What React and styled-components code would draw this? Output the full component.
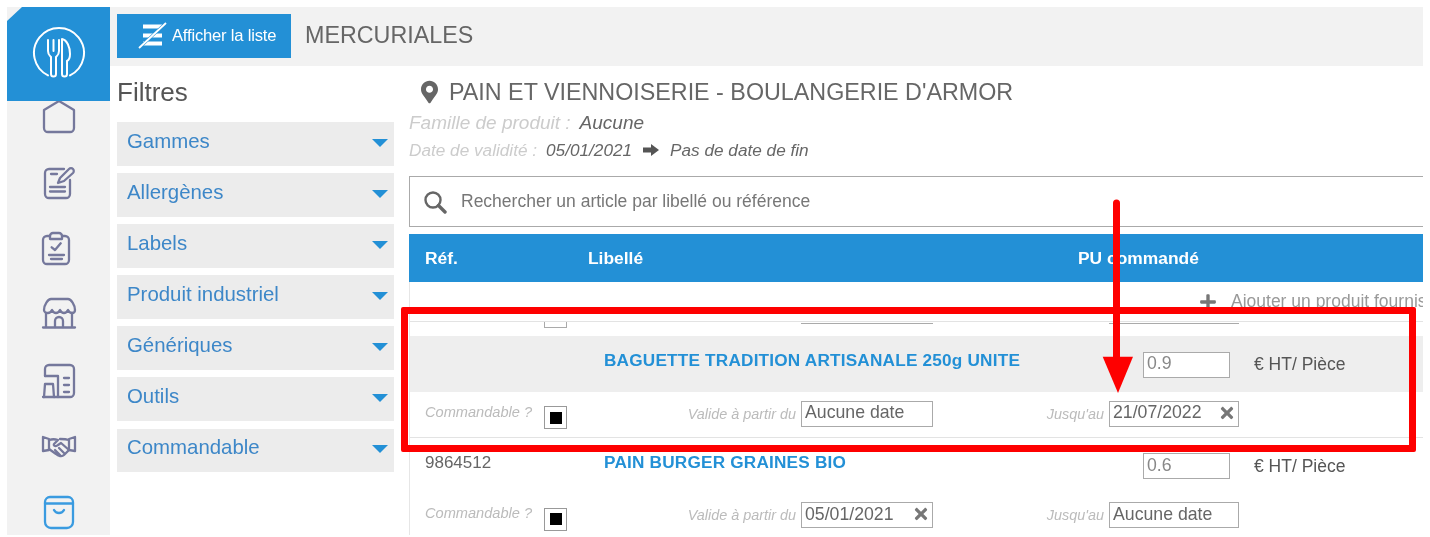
import { createGlobalStyle } from 'styled-components'
import styled from 'styled-components'
import { FaMapMarkerAlt, FaTimes, FaPlus } from 'react-icons/fa'

const GlobalStyle = createGlobalStyle`
  html, body { margin: 0; padding: 0; background: #fff; }
  body { font-family: "Liberation Sans", Arial, sans-serif; }
  * { box-sizing: border-box; }
`

const blue = '#2390d6'

const Page = styled.div`
  position: relative;
  width: 1430px;
  height: 537px;
  overflow: hidden;
  padding: 7px 7px 2px;
  display: flex;
  filter: blur(0.45px);
`
const Sidebar = styled.nav`
  width: 103px;
  flex: none;
  background: #f2f2f2;
  display: flex;
  flex-direction: column;
  align-items: center;
`
const Logo = styled.div`
  position: relative;
  z-index: 1;
  width: 100%;
  height: 94px;
  flex: none;
  padding-bottom: 2px;
  background: ${blue};
  clip-path: polygon(15px 0, 100% 0, 100% 100%, 0 100%, 0 14px);
  display: flex;
  align-items: center;
  justify-content: center;
  margin-bottom: -2px;
`
const NavIcon = styled.svg`
  width: 34px;
  height: 34px;
  flex: none;
  margin-bottom: 32px;
  overflow: visible;
  fill: none;
  stroke: ${props => props.$active ? '#3a9be0' : '#75789c'};
  stroke-width: 2.3;
  stroke-linecap: round;
  stroke-linejoin: round;
`
const Content = styled.div`
  flex: 1;
  min-width: 0;
  display: flex;
  flex-direction: column;
`
const TopBar = styled.header`
  height: 59px;
  flex: none;
  background: #f2f2f2;
  display: flex;
  align-items: center;
  padding: 0 0 1px 7px;
  gap: 14px;
`
const ListButton = styled.button`
  width: 174px;
  height: 44px;
  border: none;
  background: ${blue};
  color: #fff;
  font: 16.6px "Liberation Sans", Arial, sans-serif;
  letter-spacing: -0.2px;
  display: flex;
  align-items: center;
  gap: 5px;
  padding: 0 0 0 20px;
`
const PageTitle = styled.h1`
  margin: 0 0 2px;
  font-size: 23.3px;
  font-weight: 400;
  color: #666;
`
const Body = styled.div`
  flex: 1;
  min-height: 0;
  overflow: hidden;
  display: flex;
`
const Filters = styled.aside`
  width: 277px;
  flex: none;
  margin-left: 7px;
`
const FiltersTitle = styled.h2`
  margin: 0;
  height: 56px;
  padding-top: 11px;
  font-size: 26px;
  line-height: 30px;
  font-weight: 400;
  color: #555;
`
const FilterItem = styled.div`
  height: 43.5px;
  margin-bottom: 7.6px;
  background: #ececec;
  display: flex;
  align-items: center;
  justify-content: space-between;
  padding: 0 6px 5px 10px;
  font-size: 20.4px;
  color: #3d87c8;
`
const Caret = styled.span`
  width: 0;
  height: 0;
  margin-top: 3px;
  border-left: 8px solid transparent;
  border-right: 8px solid transparent;
  border-top: 8px solid ${blue};
`
const Main = styled.main`
  flex: 1;
  min-width: 0;
  margin-left: 15px;
`
const SupplierTitle = styled.h2`
  margin: 0 0 2px;
  height: 41px;
  padding: 11px 0 0 12px;
  display: flex;
  align-items: center;
  gap: 11px;
  font-size: 23.3px;
  font-weight: 400;
  color: #666;
  white-space: nowrap;
  svg { width: 17px; height: 26px; color: #666; }
`
const InfoLine = styled.div`
  height: ${props => props.$h}px;
  display: flex;
  align-items: center;
  font-size: ${props => props.$size}px;
  font-style: italic;
  color: #666;
  white-space: nowrap;
`
const Muted = styled.span`
  color: #ccc;
  margin-right: 9px;
`
const BlockArrow = styled.svg`
  width: 16px;
  height: 12px;
  margin: 0 11px;
  fill: #555;
`
const SearchBox = styled.div`
  margin-top: 12px;
  height: 51px;
  border: 1px solid #aaa;
  border-right: none;
  display: flex;
  align-items: center;
  padding-left: 13px;
  gap: 14px;
  font-size: 17.5px;
  color: #777;
  svg { width: 24px; height: 24px; }
`
const TableHead = styled.div`
  margin-top: 7px;
  height: 48px;
  background: ${blue};
  color: #fff;
  font-size: 17.4px;
  font-weight: 700;
  display: grid;
  grid-template-columns: 163px 490px auto;
  align-items: center;
  padding-left: 16px;
`
const Table = styled.div`
  border-left: 1px solid #e6e6e6;
`
const AddRow = styled.div`
  height: 40px;
  border-bottom: 1px solid #e3e3e3;
  display: flex;
  align-items: center;
  padding: 0 0 0 789px;
  gap: 14px;
  font-size: 17.5px;
  color: #999;
  white-space: nowrap;
  overflow: hidden;
  svg { width: 18px; height: 18px; color: #777; flex: none; }
`
const StubRow = styled.div`
  height: 14px;
  display: grid;
  grid-template-columns: 134px 23px 234px 132px 176px 130px;
  align-items: start;
`
const Stub = styled.div`
  grid-column: ${props => props.$col};
  height: ${props => props.$h}px;
  border: 1px solid #aaa;
  border-top: none;
  ${props => props.$flat && 'border-left: none; border-right: none;'}
`
const ProductRow = styled.div`
  height: ${props => props.$h}px;
  background: ${props => props.$shade ? '#eeeeee' : '#fff'};
  display: grid;
  grid-template-columns: 179px 539px 87px auto;
  padding: 0 0 0 15px;
  align-items: center;
  font-size: 17px;
  color: #666;
`
const ProductName = styled.div`
  color: ${blue};
  font-size: 17.2px;
  font-weight: 700;
  letter-spacing: 0.2px;
  white-space: nowrap;
  margin-top: ${props => props.$up}px;
`
const RefCell = styled.div`
  margin-top: ${props => props.$up}px;
`
const Field = styled.div`
  height: 26px;
  border: 1px solid #aaa;
  background: #fff;
  padding: 0 3px 2px;
  display: flex;
  align-items: center;
  justify-content: space-between;
  font-size: 17.7px;
  color: #666;
  white-space: nowrap;
  svg { width: 18px; height: 18px; color: #777; margin-right: -1px; }
`
const PriceField = styled(Field)`
  color: #888;
  margin-top: ${props => props.$down}px;
`
const Unit = styled.div`
  margin: ${props => props.$down}px 0 0 24px;
  font-size: 17.5px;
  color: #555;
`
const DetailRow = styled.div`
  height: ${props => props.$h}px;
  display: grid;
  grid-template-columns: 119px 23px 234px 132px 176px 130px;
  padding: 0 0 ${props => props.$line ? 2 : 0}px 15px;
  align-items: center;
  ${props => props.$line && 'border-bottom: 1px solid #e3e3e3;'}
`
const CheckLabel = styled.span`
  font-size: 14.6px;
  font-style: italic;
  color: #bbb;
  white-space: nowrap;
  margin-top: -4px;
`
const FieldLabel = styled.span`
  font-size: 14.4px;
  font-style: italic;
  color: #bbb;
  text-align: right;
  padding-right: 5px;
  white-space: nowrap;
`
const CheckBox = styled.span`
  width: 23px;
  height: 23px;
  margin-top: 8px;
  border: 1px solid #999;
  display: flex;
  align-items: center;
  justify-content: center;
  &::after {
    content: '';
    width: 12px;
    height: 12px;
    background: #000;
  }
`
// annotation drawn over the screenshot
const RedFrame = styled.div`
  position: absolute;
  left: 401px;
  top: 307px;
  width: 1015px;
  height: 145px;
  border: 7px solid #fe0000;
  border-radius: 2px;
  pointer-events: none;
`
const RedArrow = styled.svg`
  position: absolute;
  left: 1095px;
  top: 198px;
  width: 44px;
  height: 196px;
  pointer-events: none;
`

const filterNames = ['Gammes', 'Allergènes', 'Labels', 'Produit industriel', 'Génériques', 'Outils', 'Commandable']

const PlateLogo = () => (
  <svg width="54" height="54" viewBox="0 0 54 54" fill="none" stroke="#fff" strokeWidth="2" strokeLinecap="round" strokeLinejoin="round">
    <path d="M16 49.4A25 25 0 1 1 38 49.4" />
    <path d="M16 14v11c0 4 2 5 3 6v17a2.500 2.500 0 0 0 5 0V31c1-1 3-2 3-6V14M21.500 14v11" />
    <path d="M30 13c5 1 8 8 8 15 0 4-1 6-3 7v13a2.500 2.500 0 0 1-5 0z" />
  </svg>
)

const NoListIcon = () => (
  <svg width="30" height="28" viewBox="0 0 30 28" fill="none" stroke="#fff">
    <path d="M6 4.500h19M6 13.500h19M6 21.500h19" strokeWidth="3.800" />
    <path d="M2 26L29 1" strokeWidth="3" stroke={blue} />
    <path d="M2 26L29 1" strokeWidth="1.800" />
  </svg>
)

const HomeIcon = () => (
  <NavIcon viewBox="0 0 34 34">
    <path d="M17 2L32 11V29a4 4 0 0 1-4 4H6a4 4 0 0 1-4-4V11z" />
  </NavIcon>
)
const NoteIcon = () => (
  <NavIcon viewBox="0 0 34 34">
    <path d="M28 15v14a4 4 0 0 1-4 4H7a4 4 0 0 1-4-4V8a4 4 0 0 1 4-4h15" />
    <path d="M9 9h6M8 22h15M8 26.500h15" />
    <path d="M16 18l2-5L27 4c1-1 3-1 4 0s1 3 0 4l-9 8z" />
  </NavIcon>
)
const ClipboardIcon = () => (
  <NavIcon viewBox="0 0 34 34">
    <path d="M8 5H5a4 4 0 0 0-4 4v20a4 4 0 0 0 4 4h18a4 4 0 0 0 4-4V9a4 4 0 0 0-4-4h-3" />
    <path d="M11 2h6a3 3 0 0 1 3 3v3H8V5a3 3 0 0 1 3-3z" />
    <path d="M9.700 16.300L13 19l5.700-6.700M7 24h15M9 28h11" />
  </NavIcon>
)
const StoreIcon = () => (
  <NavIcon viewBox="0 0 34 34">
    <path d="M9 2h17c3 0 7 6 7 11 0 2-1 3-3 3s-3-1-4-3c-1 2-2 3-4 3s-3-1-4-3c-1 2-2 3-4 3s-3-1-4-3c-1 2-2 3-4 3s-4-1-4-3c0-5 4-11 7-11z" />
    <path d="M4 16v14M30 16v14M1 30.500h32" />
    <path d="M13 30v-6a4 4 0 0 1 8 0v6" />
  </NavIcon>
)
const MachineIcon = () => (
  <NavIcon viewBox="0 0 34 34">
    <path d="M3 13V6a4 4 0 0 1 4-4H28a4 4 0 0 1 4 4V30a4 4 0 0 1-4 4H1" />
    <path d="M3 13H16V34" />
    <path d="M2 34L3 21H11L12 34" />
    <path d="M22 15h5M22 22h5M22 29h5" />
  </NavIcon>
)
const HandshakeIcon = () => (
  <NavIcon viewBox="0 0 34 34">
    <path d="M1 8l6 2v11l-6 1zM33 8l-6 2v11l6 1z" />
    <path d="M7 11c3-1 6-1 9 0l-4 4c-1 2 2 3 4 1l3-2 8 7M27 11c-3-1-6-1-9-1" />
    <path d="M7 20l7 5c2 2 6 3 8 1l5-5M13 21l5 5M17 19l5 5" />
  </NavIcon>
)
const BagIcon = () => (
  <NavIcon $active viewBox="0 0 34 34">
    <path d="M8 2h18a5 5 0 0 1 5 5v20a6 6 0 0 1-6 6H9a6 6 0 0 1-6-6V7a5 5 0 0 1 5-5z" />
    <path d="M3 8.500h28M12 15c2 4 8 4 10 0" />
  </NavIcon>
)

const SearchIcon = () => (
  <svg viewBox="0 0 24 24" fill="none" stroke="#666">
    <circle cx="10" cy="10" r="7.500" strokeWidth="2.400" />
    <path d="M15.500 15.500L22 22" strokeWidth="3.400" strokeLinecap="round" />
  </svg>
)

const App = () => (
  <Page>
    <GlobalStyle />
    <Sidebar>
      <Logo><PlateLogo /></Logo>
      <HomeIcon />
      <NoteIcon />
      <ClipboardIcon />
      <StoreIcon />
      <MachineIcon />
      <HandshakeIcon />
      <BagIcon />
    </Sidebar>
    <Content>
      <TopBar>
        <ListButton><NoListIcon />Afficher la liste</ListButton>
        <PageTitle>MERCURIALES</PageTitle>
      </TopBar>
      <Body>
        <Filters>
          <FiltersTitle>Filtres</FiltersTitle>
          {filterNames.map(name => (
            <FilterItem key={name}>{name}<Caret /></FilterItem>
          ))}
        </Filters>
        <Main>
          <SupplierTitle><FaMapMarkerAlt />PAIN ET VIENNOISERIE - BOULANGERIE D'ARMOR</SupplierTitle>
          <InfoLine $h={27} $size={19}><Muted>Famille de produit :</Muted>Aucune</InfoLine>
          <InfoLine $h={28} $size={17.2}>
            <Muted>Date de validité :</Muted>05/01/2021
            <BlockArrow viewBox="0 0 16 12"><path d="M0 3.500h8V0l8 6-8 6V8.500H0z" /></BlockArrow>
            Pas de date de fin
          </InfoLine>
          <SearchBox><SearchIcon />Rechercher un article par libellé ou référence</SearchBox>
          <TableHead><span>Réf.</span><span>Libellé</span><span>PU commandé</span></TableHead>
          <Table>
            <AddRow><FaPlus />Ajouter un produit fournisseur</AddRow>
            <StubRow>
              <Stub $col={2} $h={6} />
              <Stub $col={4} $h={2} $flat />
              <Stub $col={6} $h={2} $flat />
            </StubRow>
            <ProductRow $shade $h={56}>
              <span />
              <ProductName $up={-7}>BAGUETTE TRADITION ARTISANALE 250g UNITE</ProductName>
              <PriceField $down={1}>0.9</PriceField>
              <Unit $down={1}>€ HT/ Pièce</Unit>
            </ProductRow>
            <DetailRow $h={46} $line>
              <CheckLabel>Commandable ?</CheckLabel>
              <CheckBox />
              <FieldLabel>Valide à partir du</FieldLabel>
              <Field>Aucune date</Field>
              <FieldLabel>Jusqu'au</FieldLabel>
              <Field>21/07/2022<FaTimes /></Field>
            </DetailRow>
            <ProductRow $h={54}>
              <RefCell $up={-5}>9864512</RefCell>
              <ProductName $up={-5}>PAIN BURGER GRAINES BIO</ProductName>
              <PriceField $down={2}>0.6</PriceField>
              <Unit $down={2}>€ HT/ Pièce</Unit>
            </ProductRow>
            <DetailRow $h={46}>
              <CheckLabel>Commandable ?</CheckLabel>
              <CheckBox />
              <FieldLabel>Valide à partir du</FieldLabel>
              <Field>05/01/2021<FaTimes /></Field>
              <FieldLabel>Jusqu'au</FieldLabel>
              <Field>Aucune date</Field>
            </DetailRow>
          </Table>
        </Main>
      </Body>
    </Content>
    <RedFrame />
    <RedArrow viewBox="0 0 44 196">
      <path d="M21.500 5V162" stroke="#fe0000" strokeWidth="7" strokeLinecap="round" />
      <path d="M7.700 158.700H38L23 195z" fill="#fe0000" />
    </RedArrow>
  </Page>
)

export default App
